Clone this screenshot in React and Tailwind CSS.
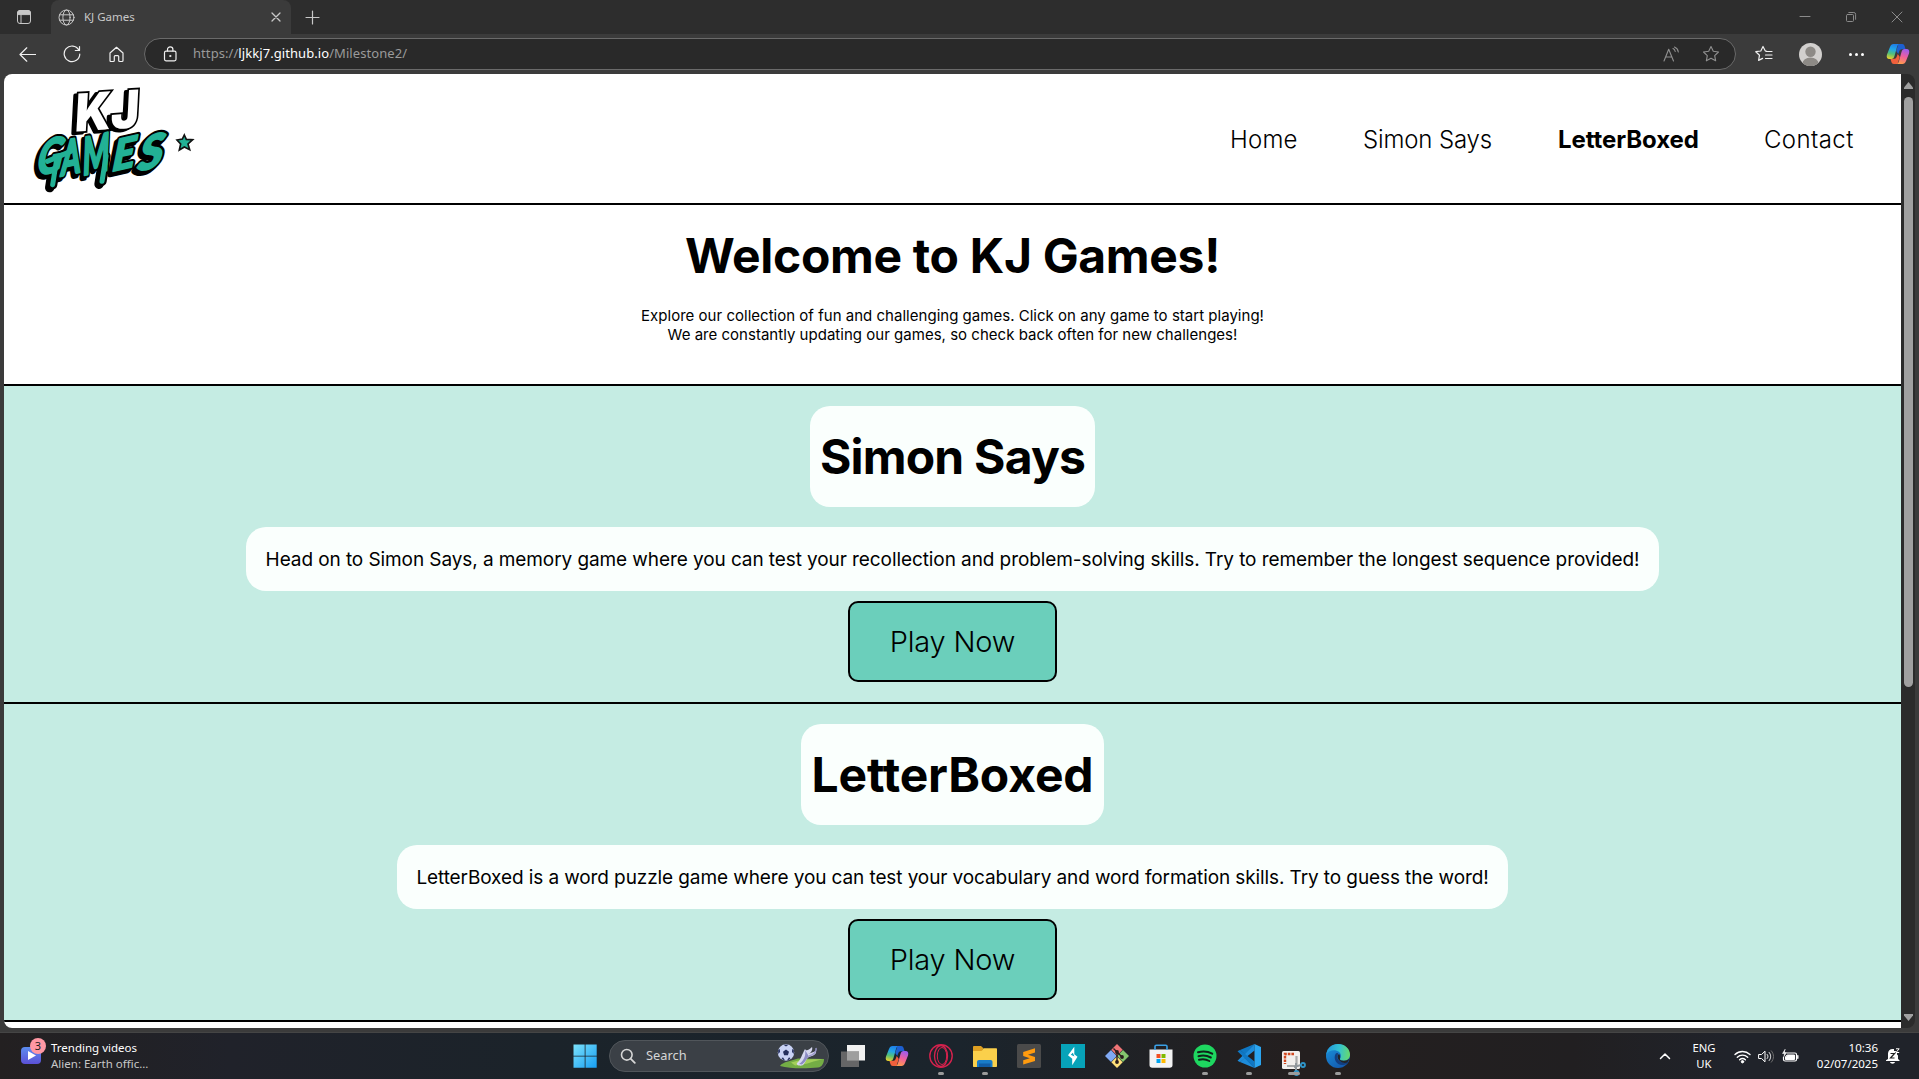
import React from "react";

function Svg({ className, vb = "0 0 24 24", children }) {
  return (
    <svg className={className} viewBox={vb} fill="none" stroke="currentColor" strokeLinecap="round" strokeLinejoin="round">
      {children}
    </svg>
  );
}

function CopilotIcon({ className, id }) {
  return (
    <svg className={className} viewBox="0 0 24 24">
      <defs>
        <linearGradient id={id + "a"} x1="0.5" y1="0" x2="0.3" y2="1">
          <stop offset="0" stopColor="#1f7fe8" />
          <stop offset="0.35" stopColor="#22a7e8" />
          <stop offset="0.65" stopColor="#52c07a" />
          <stop offset="1" stopColor="#e8d12c" />
        </linearGradient>
        <linearGradient id={id + "b"} x1="0.7" y1="0" x2="0.4" y2="1">
          <stop offset="0" stopColor="#9a5cf0" />
          <stop offset="0.5" stopColor="#ef5f9d" />
          <stop offset="1" stopColor="#ff9a4d" />
        </linearGradient>
      </defs>
      <path d="M12.500 2h3.700c1.300 0 2 .8 2.400 2l1 3.200h-3.600c-1.500 0-2.300.8-2.800 2.300l-1 2.500-2-3z" fill="#1d5fd0" />
      <path d="M11.500 22H7.800c-1.300 0-2-.8-2.400-2l-1-3.200H8c1.500 0 2.300-.8 2.800-2.300l1-2.500 2 3z" fill="#f0603c" />
      <path d="M7.500 2H14c-1.500 0-2.500 1-3 3l-2.500 9c-.5 2-1.500 3-3.300 3H3.500C1 17 .2 15 1 12.500L4 5c.7-2 1.800-3 3.500-3z" fill={`url(#${id}a)`} />
      <path d="M16.500 22H10c1.500 0 2.500-1 3-3l2.500-9c.5-2 1.500-3 3.300-3h1.700c2.500 0 3.300 2 2.500 4.500L20 19c-.7 2-1.800 3-3.500 3z" fill={`url(#${id}b)`} />
    </svg>
  );
}

function Logo() {
  return (
    <svg className="ml-4 h-[120px] w-[190px] overflow-visible" viewBox="0 0 570 360" fontFamily="Inter" fontWeight="900">
      <g transform="translate(0 -4) rotate(-4 255 105) skewX(-7)" fontSize="156">
        <text x="168" y="160" textLength="193" lengthAdjust="spacingAndGlyphs" fill="#000" stroke="#000" strokeWidth="11" strokeLinejoin="round">KJ</text>
        <text x="178" y="156" textLength="193" lengthAdjust="spacingAndGlyphs" fill="#fff" stroke="#000" strokeWidth="11" paintOrder="stroke" aria-hidden="true">KJ</text>
      </g>
      <g transform="translate(2 1)" fontFamily="Lato" fontStyle="italic" fontWeight="700" strokeLinejoin="round" strokeLinecap="round">
        {["shadow", "outline", "fill"].map((layer) => (
          <g
            key={layer}
            aria-hidden={layer !== "fill"}
            transform={layer === "shadow" ? "translate(-9 9)" : undefined}
            fill={layer === "fill" ? "#22b195" : "#000"}
            stroke={layer === "fill" ? "#22b195" : "#000"}
            strokeWidth={layer === "fill" ? 7 : 19}
          >
            <text transform="translate(46 288) rotate(-10) skewX(-18) scale(.78 .95)" fontSize="146">G</text>
            <text transform="translate(122 290) rotate(-12) skewX(-12) scale(.66 1)" fontSize="140">A</text>
            <text transform="translate(188 288) rotate(-12) skewX(-10) scale(.62 1)" fontSize="152">M</text>
            <text transform="translate(274 276) rotate(-13) skewX(-18) scale(1.05 1)" fontSize="122">E</text>
            <text transform="translate(350 276) rotate(-14) skewX(-22) scale(1.120 1)" fontSize="130">S</text>
            <path d="M80 246L150 216M108 240L96 316M256 230L244 306" strokeWidth={layer === "fill" ? 15 : 28} />
          </g>
        ))}
      </g>
      <path d="M493 168l6 13 19 1-14 13 5 17-16-8-15 9 4-18-11-12 16-3z" fill="#22b195" stroke="#111" strokeWidth="5" />
    </svg>
  );
}

function TabBar() {
  return (
    <div className="flex h-[34px] shrink-0 items-center bg-[#2d2d2d] text-[#c8c8c8]">
      <Svg className="ml-[16px] h-4 w-4" vb="0 0 16 16">
        <rect x="1.500" y="1.500" width="13" height="13" rx="2.500" />
        <path d="M1.500 5.200V4a2.500 2.500 0 0 1 2.500-2.500h8A2.500 2.500 0 0 1 14.500 4v1.200z" fill="currentColor" />
        <path d="M5 5v9.500" />
      </Svg>
      <div className="ml-[19px] flex h-[34px] w-[240px] items-center rounded-t-lg bg-[#3b3b3b]">
        <Svg className="ml-[7px] h-[17px] w-[17px]" vb="0 0 17 17">
          <circle cx="8.500" cy="8.500" r="7.500" />
          <ellipse cx="8.500" cy="8.500" rx="3.600" ry="7.500" />
          <path d="M1.500 5.800h14M1.500 11.200h14" />
        </Svg>
        <span className="ml-[9px] flex-1 font-['Noto_Sans'] text-[11.5px]">KJ Games</span>
        <Svg className="mr-[10px] h-[10px] w-[10px]" vb="0 0 10 10">
          <path d="M1 1l8 8M9 1l-8 8" strokeWidth="1.300" />
        </Svg>
      </div>
      <Svg className="ml-[14px] h-[15px] w-[15px]" vb="0 0 15 15">
        <path d="M7.500 1v13M1 7.500h13" strokeWidth="1.200" />
      </Svg>
      <div className="ml-auto flex items-center text-[#8b8b8b]">
        <Svg className="h-3 w-3" vb="0 0 12 12"><path d="M1 5.500h10" /></Svg>
        <Svg className="ml-[34px] h-3 w-3" vb="0 0 12 12">
          <rect x="1.500" y="3.500" width="7" height="7" rx="1" />
          <path d="M3.800 1.500h5a1.800 1.800 0 0 1 1.800 1.800v5" />
        </Svg>
        <Svg className="mr-[16px] ml-[34px] h-3 w-3" vb="0 0 12 12"><path d="M1 1l10 10M11 1L1 11" /></Svg>
      </div>
    </div>
  );
}

const starPath = "M9 1.500l2.300 4.800 5.200.7-3.800 3.600.95 5.200L9 13.300l-4.650 2.500.95-5.200L1.500 7l5.200-.7z";

function Toolbar() {
  return (
    <div className="flex h-10 shrink-0 items-center bg-[#3b3b3b] text-[#f0f0f0]">
      <Svg className="ml-[19px] h-[17px] w-[17px]" vb="0 0 17 17"><path d="M16.500 8.500H1.200M7.800 1.800L1 8.500l6.800 6.700" strokeWidth="1.200" /></Svg>
      <Svg className="ml-[27px] h-[18px] w-[18px]" vb="0 0 18 18">
        <path d="M15.800 5A7.800 7.800 0 1 0 16.800 9M16.500 1.500v4h-4.200" strokeWidth="1.200" />
      </Svg>
      <Svg className="ml-[27px] h-[17px] w-[17px]" vb="0 0 17 17">
        <path d="M2 7L8.500 1.300 15 7v7.500c0 .6-.4 1-1 1h-2.300c-.6 0-1-.4-1-1v-4c0-.5-.4-.9-.9-.9H7.200c-.5 0-.9.4-.9.900v4c0 .6-.4 1-1 1H3c-.6 0-1-.4-1-1z" strokeWidth="1.200" />
      </Svg>
      <div className="ml-[19px] flex h-8 w-[1592px] items-center rounded-full border border-[#6a6a6a] bg-[#292929]">
        <Svg className="ml-[17px] h-4 w-4" vb="0 0 16 16">
          <rect x="2.500" y="5.200" width="11.500" height="9.600" rx="1.500" strokeWidth="1.200" />
          <path d="M5.500 5V3.500a2.700 2.700 0 0 1 5.400 0V5" strokeWidth="1.200" />
          <circle cx="8.200" cy="10" r=".6" fill="currentColor" />
        </Svg>
        <span className="ml-[15px] flex-1 font-['Noto_Sans'] text-[13px] tracking-[0.07px] text-[#9a9a9a]">
          https://<span className="text-white">ljkkj7.github.io</span>/Milestone2/
        </span>
        <Svg className="h-[17px] w-[17px] text-[#909090]" vb="0 0 17 17">
          <path d="M1 15L5.700 3.200 10.500 15M2.600 11h6.300M10 2.500c1.300.6 2 1.600 2.200 3M11.500 1c2.200.9 3.500 2.700 3.800 5" strokeWidth="1.100" />
        </Svg>
        <Svg className="mr-[15px] ml-[22px] h-[18px] w-[18px] text-[#909090]" vb="0 0 18 18"><path d={starPath} strokeWidth="1.100" /></Svg>
      </div>
      <Svg className="ml-[19px] h-[18px] w-[18px]" vb="0 0 18 18">
        <path d="M11.500 6.200L10.200 5.800 8 1.500 5.800 6l-5 .7 3.700 3.500-.9 5.200 4-2M11 6.500h6M10.500 10h6.500M10.500 13.500h6.500" strokeWidth="1.200" />
      </Svg>
      <svg className="ml-[26px] h-[23px] w-[23px] shrink-0" viewBox="0 0 23 23">
        <defs><clipPath id="avatar"><circle cx="11.500" cy="11.500" r="11.500" /></clipPath></defs>
        <g clipPath="url(#avatar)">
          <rect width="23" height="23" fill="#d2d0ce" />
          <circle cx="11.500" cy="8.700" r="5.200" fill="#8d8a86" />
          <ellipse cx="11.500" cy="20.500" rx="8" ry="6" fill="#8d8a86" />
        </g>
      </svg>
      <div className="ml-[27px] flex gap-[3px]">
        <i className="h-[3px] w-[3px] rounded-full bg-white" />
        <i className="h-[3px] w-[3px] rounded-full bg-white" />
        <i className="h-[3px] w-[3px] rounded-full bg-white" />
      </div>
      <CopilotIcon id="cpt" className="ml-[22px] h-6 w-6 shrink-0" />
    </div>
  );
}

function GameSection({ title, titleClass, text, textClass }) {
  return (
    <section className="flex h-[318px] shrink-0 flex-col items-center border-b-2 border-black bg-[#c5ece3] pt-5">
      <h2 className={"flex h-[101px] items-center justify-center rounded-[20px] bg-[#fafffd] pt-px text-[48px] font-bold " + titleClass}>{title}</h2>
      <p className={"mt-5 flex h-16 items-center justify-center rounded-[20px] bg-[#fafffd] pt-[2px] text-[19px] whitespace-nowrap " + textClass}>{text}</p>
      <button className="mt-[10px] h-[81px] w-[209px] rounded-[10px] border-2 border-black bg-[#6bcfbb] pt-px text-[29px] font-[340] tracking-[-0.2px]">Play Now</button>
    </section>
  );
}

function Page() {
  return (
    <div className="mx-1 flex h-[954px] shrink-0 overflow-hidden rounded-lg bg-[#2b2b2b]">
      <main className="flex w-[1897px] flex-col overflow-hidden bg-white font-['Inter',sans-serif] text-black">
        <header className="flex h-[131px] shrink-0 items-center border-b-2 border-black">
          <Logo />
          <nav className="mr-[44px] ml-auto flex gap-[64px] pt-[3px] text-[24px] font-[350] whitespace-nowrap">
            <a className="w-[69px] tracking-[0.2px]">Home</a>
            <a className="w-[131px] tracking-[-0.15px]">Simon Says</a>
            <a className="w-[142px] font-bold tracking-[-0.1px]">LetterBoxed</a>
            <a className="w-[93px] tracking-[0.400px]">Contact</a>
          </nav>
        </header>
        <section className="flex h-[181px] shrink-0 flex-col items-center border-b-2 border-black text-center">
          <h1 className="mt-[21px] text-[48px] leading-[60px] font-bold tracking-[-0.33px]">Welcome to KJ Games!</h1>
          <p className="mt-[20px] text-[15px] leading-[19px] tracking-[0.02px]">
            Explore our collection of fun and challenging games. Click on any game to start playing!
            <br />
            We are constantly updating our games, so check back often for new challenges!
          </p>
        </section>
        <GameSection
          title="Simon Says"
          titleClass="w-[285px] tracking-[-0.8px]"
          text="Head on to Simon Says, a memory game where you can test your recollection and problem-solving skills. Try to remember the longest sequence provided!"
          textClass="w-[1413px] tracking-[-0.085px]"
        />
        <GameSection
          title="LetterBoxed"
          titleClass="w-[303px] tracking-[-0.15px]"
          text="LetterBoxed is a word puzzle game where you can test your vocabulary and word formation skills. Try to guess the word!"
          textClass="w-[1111px] tracking-[-0.1px]"
        />
      </main>
      <div className="flex w-[14px] flex-col items-center pt-2 pb-[7px]">
        <svg className="h-[7px] w-[9px]" viewBox="0 0 9 7"><path d="M4.500 0L9 5.500V7H0V5.500z" fill="#a0a0a0" /></svg>
        <div className="mt-2 h-[590px] w-[9px] rounded-full bg-[#a0a0a0]" />
        <svg className="mt-auto h-[7px] w-[9px]" viewBox="0 0 9 7"><path d="M4.500 7L9 1.500V0H0v1.500z" fill="#a0a0a0" /></svg>
      </div>
    </div>
  );
}

function Slot({ running, wide, children }) {
  return (
    <div className="flex h-[46px] w-[44.1px] shrink-0 flex-col items-center pt-[11px]">
      <div className="h-6 w-6">{children}</div>
      {running && <i className={(wide ? "w-3" : "w-1.5") + " mt-[4px] h-[3px] rounded-full bg-[#9b9b9b]"} />}
    </div>
  );
}

function TaskbarCenter() {
  const s = "h-6 w-6";
  return (
    <div className="flex items-start">
      <Slot>
        <svg className={s} viewBox="0 0 24 24">
          <defs><linearGradient id="win" x1="0" y1="0" x2="24" y2="24" gradientUnits="userSpaceOnUse"><stop stopColor="#7ee3fb" /><stop offset="1" stopColor="#159df3" /></linearGradient></defs>
          <path d="M.5.500h11.200v11.200H.5zM12.500.500h11.200v11.200H12.500zM.5 12.500h11.200v11.200H.5zM12.500 12.500h11.200v11.200H12.500z" fill="url(#win)" />
        </svg>
      </Slot>
      <div className="mt-[7px] mr-[1.500px] ml-[2.500px] flex h-8 w-[220px] items-center rounded-full border border-[#51565b] bg-[#3b4046] text-[#d6d6d6]">
        <Svg className="ml-[10px] h-4 w-4" vb="0 0 16 16">
          <circle cx="6.800" cy="6.800" r="5.300" strokeWidth="1.600" /><path d="M10.800 10.800l4 4" strokeWidth="1.800" />
        </Svg>
        <span className="ml-[10px] flex-1 font-['Noto_Sans'] text-[12.8px]">Search</span>
        <svg className="mr-[2px] h-[26px] w-[50px]" viewBox="0 0 50 26">
          <path d="M12 18.500l10-3 26 .5c0 4-2 8-6 8.500-10 1-28 1.500-38-1.500 1-2 4-3.500 8-4.500z" fill="#74ad45" />
          <path d="M15 19.500c8-3 18-4 32-3-10 1-14 5-28 6z" fill="#a3cf5a" />
          <circle cx="10" cy="9.500" r="8.200" fill="#c9d2f5" />
          <path d="M10 6.500l3 2.200-1.100 3.500H8.100L7 8.700zM7.500 1.700l5 0-2.500 1.800zM2.200 7l1.600-1 .2 3-1.800 2zM17.800 7l-1.600-1-.2 3 1.800 2zM5.500 15l1.600-.5 1.800 2.700-2-.5zM14.500 15l-1.600-.5-1.800 2.700 2-.5z" fill="#252f5e" />
          <path d="M36 4c1 3-1 6-4 7l8-3c1 3-3 5-7 6-3 1-4 8-7 8.500-3 .5-6-.5-5-2.500 4-3 5-9 8-14 1 2 3 2 7-2z" fill="#d7d8ef" />
          <path d="M29 7c1 4 0 10-6 14l3 .5c4-3 5-7 7-8z" fill="#8c8bc4" />
          <path d="M40 5c1 3-2 7-7 8" stroke="#9b98cb" strokeWidth="1.500" fill="none" />
        </svg>
      </div>
      <Slot>
        <svg className="mt-[1px] h-[22px] w-6" viewBox="0 0 24 22">
          <path d="M6 0h18v15.500H6z" fill="#f1f1f1" /><path d="M0 6.500h18V22H0z" fill="#6d6d6d" opacity=".92" /><path d="M6 6.500h12v9H6z" fill="#9f9f9f" />
        </svg>
      </Slot>
      <Slot><CopilotIcon id="cpb" className={s} /></Slot>
      <Slot running>
        <svg className={s} viewBox="0 0 24 24" fill="none" stroke="#d5224d">
          <circle cx="12" cy="12" r="11.200" strokeWidth="1.400" /><ellipse cx="12" cy="12" rx="6.500" ry="10.500" strokeWidth="1.300" /><ellipse cx="13" cy="12" rx="4.700" ry="8.500" strokeWidth="1" />
        </svg>
      </Slot>
      <Slot running>
        <svg className={s} viewBox="0 0 24 24">
          <path d="M0 3.200C0 2.500.5 2 1.200 2H8l2.500 2.200L9 7H0z" fill="#dfa022" />
          <path d="M0 7h8.500l2.200-2.700H23c.6 0 1 .4 1 1V22c0 .6-.4 1-1 1H1c-.6 0-1-.4-1-1z" fill="#fbd04b" />
          <path d="M4 23v-5c0-1.200.8-2 2-2h11.500c1.200 0 2 .8 2 2v5z" fill="#197cc9" /><path d="M6 19.500h11.500V23H6z" fill="#115ca6" />
        </svg>
      </Slot>
      <Slot>
        <svg className={s} viewBox="0 0 24 24"><rect width="24" height="24" rx="1.500" fill="#4a4a4a" /><path d="M18 4.200v4.200l-7 2.300 7 2.300v4L6.200 20.500v-4.200l6.600-2.100-6.600-2.200v-4z" fill="#ff9b0f" /></svg>
      </Slot>
      <Slot>
        <svg className={s} viewBox="0 0 24 24"><path d="M0 0h24v24H0z" fill="#07a3b9" /><path d="M13.300 2.800v7.400l3.200 2.600-5.300 8.400v-6.400L7 11.200z" fill="#fff" /><path d="M11.800 8.800l-2 2 3.700 1.600z" fill="#07a3b9" /></svg>
      </Slot>
      <Slot>
        <svg className={s} viewBox="0 0 24 24">
          <path d="M12 0l5.700 5.700L12 11.400 6.300 5.700z" fill="#f07476" /><path d="M6 6l5.700 6L6 18 0 12z" fill="#80a9f4" /><path d="M18 6l6 6-6 6-5.700-6z" fill="#84c66e" /><path d="M12 12.600l5.700 5.700L12 24l-5.700-5.700z" fill="#ffe07a" />
          <path d="M8.500 4.500L12 8v11M12 8l5 5" stroke="#2a1d1d" strokeWidth="1.400" fill="none" /><circle cx="12" cy="8" r="1.900" fill="#2a1d1d" /><circle cx="17" cy="13" r="1.900" fill="#2a1d1d" /><circle cx="12" cy="18" r="1.900" fill="#2a1d1d" />
        </svg>
      </Slot>
      <Slot>
        <svg className={s} viewBox="0 0 24 24">
          <path d="M.5 5.500h23V21c0 1.700-1 2.700-2.700 2.700H3.200C1.500 23.700.5 22.700.5 21z" fill="#f3f3f3" /><path d="M6 6V2.500C6 1.700 6.500 1.200 7.300 1.200h9.400c.8 0 1.300.5 1.300 1.300V6" fill="none" stroke="#3aa0e5" strokeWidth="1.600" />
          <path d="M7.500 10h4v4h-4z" fill="#f25022" /><path d="M12.500 10h4v4h-4z" fill="#7fba00" /><path d="M7.500 15h4v4h-4z" fill="#00a4ef" /><path d="M12.500 15h4v4h-4z" fill="#ffb900" />
        </svg>
      </Slot>
      <Slot running>
        <svg className={s} viewBox="0 0 24 24"><circle cx="12" cy="12" r="11.500" fill="#1ed760" /><path d="M5 8.300c5-1.500 10-1 14.200 1.400M5.500 12.200c4.400-1.300 8.500-.8 12.300 1.300M6 15.800c3.700-1 7-.7 10.300 1.200" fill="none" stroke="#10231a" strokeWidth="2" strokeLinecap="round" /></svg>
      </Slot>
      <Slot running>
        <svg className={s} viewBox="0 0 24 24">
          <path d="M17.500 24L8 14l-5.200 4L.5 16.700 17.500 0v6.500L3 18z" fill="#1d8cdb" />
          <path d="M17.500 0L8 10 2.800 6 .5 7.300l17 16.700V17.500L3 6z" fill="#0f78c5" />
          <path d="M17.500 0L24 3v18l-6.500 3z" fill="#2ba5f0" />
        </svg>
      </Slot>
      <Slot running wide>
        <svg className="mt-[7px] -mb-[7px] h-6 w-6 overflow-visible" viewBox="0 0 24 24">
          <rect width="18" height="18" rx="1.500" fill="#f2efed" /><path d="M12 3H3v10" fill="none" stroke="#d2471f" strokeWidth="2.400" strokeDasharray="2.600 1" /><path d="M14.500 5v10H5" fill="none" stroke="#a9a9a9" strokeWidth="2.200" />
          <path d="M12 16l7-2M14 22V12" stroke="#90979c" strokeWidth="2" /><circle cx="21" cy="14" r="2" fill="none" stroke="#2e95c9" strokeWidth="1.800" /><circle cx="14.500" cy="22" r="2" fill="none" stroke="#2e95c9" strokeWidth="1.800" />
        </svg>
      </Slot>
      <Slot running>
        <svg className={s} viewBox="0 0 24 24">
          <defs>
            <linearGradient id="e1" x1="0" y1=".3" x2="1" y2=".4"><stop stopColor="#2196dd" /><stop offset=".55" stopColor="#34c3d0" /><stop offset="1" stopColor="#67d96c" /></linearGradient>
            <linearGradient id="e2" x1="0" y1="0" x2=".7" y2="1"><stop stopColor="#1a94dc" /><stop offset="1" stopColor="#1359ad" /></linearGradient>
          </defs>
          <circle cx="12" cy="12" r="12" fill="url(#e2)" />
          <path d="M.2 10.500C1.200 4 6 0 12 0c7 0 12 5 12 10.500 0 4-3 6.300-6.300 6.300-2.600 0-4.200-1-3.700-2 1.500-2 1.300-5-1-7C9 5 3 6 .2 10.500z" fill="url(#e1)" />
          <path d="M9.500 10c-2.500 5 1 11.500 7.500 11 2-.1 4-1 5-2 .8-.7 0-1.600-1-1-4 1.500-9-.5-9.800-4.500-.2-1.500.2-2.700 1-3.500 0-1.500-2-1.500-2.700 0z" fill="#123e80" />
          <path d="M11.500 12.500c0-2 1.500-2.500 2-2 .7 1.500.8 3 .5 4.300-.5 1 1 2 3.700 2 2.300 0 4.300-.8 5.800-2.200-.5 2-1.500 3.300-2.500 4-4 1.500-9.500-1.800-9.500-6.100z" fill="#222428" />
        </svg>
      </Slot>
    </div>
  );
}

function Taskbar() {
  return (
    <footer className="flex h-[46px] shrink-0 items-start bg-[linear-gradient(90deg,#232021_0%,#20222a_12%,#1b232a_28%,#1b242c_50%,#241f1f_68%,#211f21_82%,#20232a_90%)] font-['Noto_Sans'] text-white">
      <div className="flex w-[562.5px] shrink-0 items-start pl-[21px]">
        <div className="relative mt-[14px] h-[17px] w-5 rounded-[4px] bg-gradient-to-b from-[#5b8df0] to-[#5b50d6]">
          <svg className="absolute top-[4px] left-[7px] h-[9px] w-2" viewBox="0 0 8 9"><path d="M0 0l8 4.500L0 9z" fill="#fff" /></svg>
          <span className="absolute -top-[9px] left-[9px] flex h-4 w-4 items-center justify-center rounded-full bg-[#ff98a4] text-[11px] text-[#222]">3</span>
        </div>
        <div className="mt-[7px] ml-[10px] text-[11.5px] leading-4">
          <div>Trending videos</div>
          <div className="text-[#c8c8c8]">Alien: Earth offic...</div>
        </div>
      </div>
      <TaskbarCenter />
      <div className="ml-auto flex h-[46px] items-center">
        <Svg className="h-3 w-3" vb="0 0 12 12"><path d="M1.500 8.500L6 4l4.500 4.500" strokeWidth="1.500" /></Svg>
        <div className="ml-[20px] w-[26px] text-center text-[11.3px] leading-4">ENG<br />UK</div>
        <Svg className="ml-[17px] h-[15px] w-[17px]" vb="0 0 17 15">
          <path d="M1 5.500c4.300-4 10.700-4 15 0M3.300 8.200c3-2.800 7.400-2.800 10.400 0M5.600 10.800c1.700-1.500 4.100-1.500 5.800 0" strokeWidth="1.400" /><circle cx="8.500" cy="12.700" r="1.200" fill="currentColor" />
        </Svg>
        <Svg className="ml-[7px] h-[15px] w-[17px]" vb="0 0 17 15">
          <path d="M1 5.500h2.500L7 2.200v10.600L3.500 9.500H1z" /><path d="M9.200 5.500c1 1.200 1 2.800 0 4M11.200 3.500c2 2.400 2 5.600 0 8" /><path d="M13.300 1.800c3 3.500 3 7.900 0 11.400" stroke="#6e6e6e" />
        </Svg>
        <Svg className="ml-[7px] h-[15px] w-[17px]" vb="0 0 17 15">
          <path d="M5 4h8a1.500 1.500 0 0 1 1.500 1.500v5A1.500 1.500 0 0 1 13 12H3a1.500 1.500 0 0 1-1.500-1.500V8" strokeWidth="1.200" /><path d="M5.500 6H12.500v4.500h-9V8z" fill="currentColor" /><path d="M15.800 6.800v2.400" strokeWidth="1.400" /><path d="M3 .5L.5 4.500h2L2 7.500l2.500-4h-2z" fill="currentColor" strokeWidth=".5" />
        </Svg>
        <div className="ml-[14px] w-[65px] text-right text-[11.5px] leading-4 whitespace-nowrap">10:36<br />02/07/2025</div>
        <svg className="mr-[19px] ml-[8px] h-4 w-[14px]" viewBox="0 0 14 16">
          <path d="M2 11V5.500C2 2.800 4 1 6.500 1H8v2h3v3.500l1 1V11l1.500 1.300v.7H0v-.7z" fill="#fff" /><path d="M4 14h5c-.3 1-1.300 1.700-2.500 1.700S4.300 15 4 14z" fill="#fff" /><path d="M4.500 5.500h4L4.500 10h4M10 .8h3.200L10 4.500h3.200" stroke="#222" strokeWidth="1.200" fill="none" /><path d="M10 .8h3.200L10 4.500h3.200" stroke="#fff" strokeWidth="1" fill="none" />
        </svg>
      </div>
    </footer>
  );
}

export default function App() {
  return (
    <div className="flex h-[1079px] w-[1919px] flex-col overflow-hidden bg-[#3b3b3b]">
      <TabBar />
      <Toolbar />
      <Page />
      <div className="h-[5px] shrink-0 border-b border-[#454545]" />
      <Taskbar />
    </div>
  );
}
